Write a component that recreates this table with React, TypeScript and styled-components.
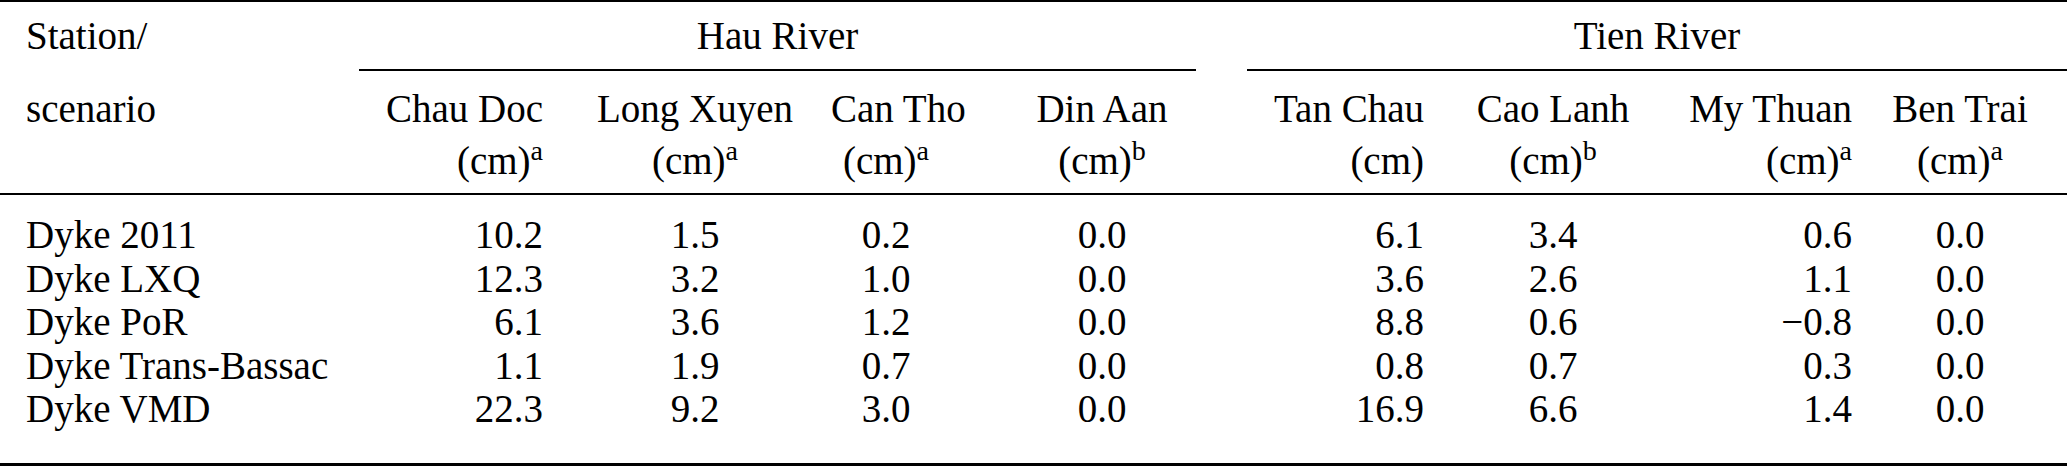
import styled, { createGlobalStyle } from "styled-components";

const GlobalStyle = createGlobalStyle`
  html, body {
    margin: 0;
    padding: 0;
    background: #fff;
  }
  body {
    font-family: "Liberation Serif", "Times New Roman", serif;
    color: #000;
  }
`;

type Align = "left" | "center" | "right";

const COLS = "359px 200px 272px 110px 306px 193px 226px 202px 184px";
const ALIGN: Align[] = ["left", "right", "center", "center", "center", "right", "center", "right", "center"];

const STATIONS = [
  { name: "Chau Doc", note: "a" },
  { name: "Long Xuyen", note: "a" },
  { name: "Can Tho", note: "a" },
  { name: "Din Aan", note: "b" },
  { name: "Tan Chau", note: "" },
  { name: "Cao Lanh", note: "b" },
  { name: "My Thuan", note: "a" },
  { name: "Ben Trai", note: "a" },
];

const ROWS = [
  ["Dyke 2011", "10.2", "1.5", "0.2", "0.0", "6.1", "3.4", "0.6", "0.0"],
  ["Dyke LXQ", "12.3", "3.2", "1.0", "0.0", "3.6", "2.6", "1.1", "0.0"],
  ["Dyke PoR", "6.1", "3.6", "1.2", "0.0", "8.8", "0.6", "\u22120.8", "0.0"],
  ["Dyke Trans-Bassac", "1.1", "1.9", "0.7", "0.0", "0.8", "0.7", "0.3", "0.0"],
  ["Dyke VMD", "22.3", "9.2", "3.0", "0.0", "16.9", "6.6", "1.4", "0.0"],
];

function TableBlock() {
  return (
    <>
      <GlobalStyle />
      <Wrap>
        <Rule $h={2} />

        <Row $lh={67}>
          <Cell $align="left">Station/</Cell>
          <GroupHead $col="2 / 6" $mr={51}>Hau River</GroupHead>
          <GroupHead $col="6 / -1" $mr={-15}>Tien River</GroupHead>
        </Row>

        <Row $lh={52} $pt={12}>
          <Cell $align="left">scenario</Cell>
          {STATIONS.map((s, i) => (
            <Cell key={s.name} $align={ALIGN[i + 1]} $pl={i === 3 ? 16 : 0}>
              {s.name}
            </Cell>
          ))}
        </Row>

        <Row $lh={52} $pb={6}>
          <Cell $align="left" />
          {STATIONS.map((s, i) => (
            <Cell key={s.name} $align={ALIGN[i + 1]} $pl={i === 3 ? 16 : 0}>
              (cm){s.note && <Sup>{s.note}</Sup>}
            </Cell>
          ))}
        </Row>

        <Rule $h={2} />

        <Body>
          {ROWS.map((row) => (
            <Row key={row[0]} $lh={43.5}>
              {row.map((v, i) => (
                <Cell key={i} $align={ALIGN[i]} $pl={i === 4 ? 16 : 0}>
                  {v}
                </Cell>
              ))}
            </Row>
          ))}
        </Body>

        <Rule $h={3} />
      </Wrap>
    </>
  );
}

const Wrap = styled.div`
  width: 2067px;
  font-size: 39px;
`;

const Rule = styled.div<{ $h: number }>`
  height: ${(p) => p.$h}px;
  background: #000;
`;

const Body = styled.div`
  padding: 18px 0 32.5px;
`;

const Row = styled.div<{ $lh: number; $pt?: number; $pb?: number }>`
  display: grid;
  grid-template-columns: ${COLS};
  line-height: ${(p) => p.$lh}px;
  padding-top: ${(p) => p.$pt || 0}px;
  padding-bottom: ${(p) => p.$pb || 0}px;
`;

const GroupHead = styled.div<{ $col: string; $mr: number }>`
  grid-column: ${(p) => p.$col};
  margin-right: ${(p) => p.$mr}px;
  text-align: center;
  border-bottom: 2px solid #000;
`;

const Cell = styled.div<{ $align: Align; $pl?: number }>`
  text-align: ${(p) => p.$align};
  white-space: nowrap;
  padding-left: ${(p) => (p.$align === "left" ? 26 : p.$pl || 0)}px;
  padding-right: ${(p) => (p.$align === "right" ? 16 : 0)}px;
`;

const Sup = styled.sup`
  font-size: 0.72em;
  line-height: 0;
  vertical-align: 0.5em;
`;

export default TableBlock;
